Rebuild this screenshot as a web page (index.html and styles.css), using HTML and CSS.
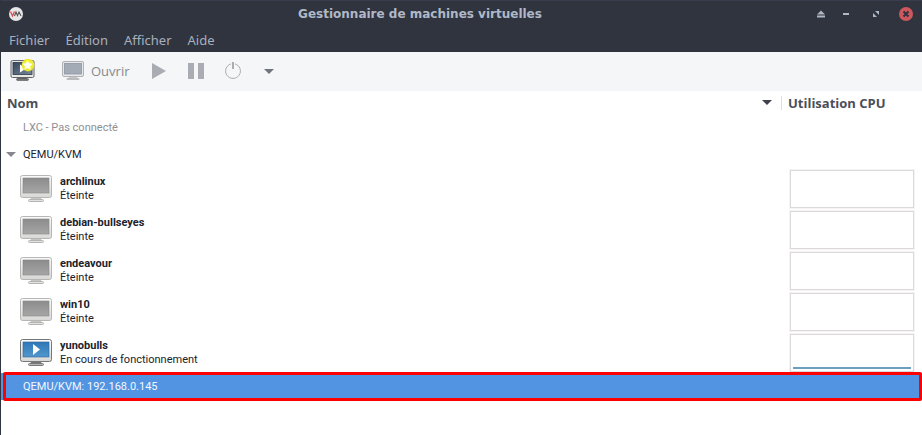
FILE: index.html
```html
<!DOCTYPE html>
<html lang="fr">
<head>
<meta charset="utf-8">
<title>Gestionnaire de machines virtuelles</title>
<link rel="stylesheet" href="styles.css">
</head>
<body>
<svg class="defs" aria-hidden="true">
  <defs>
    <linearGradient id="frame" x1="0" y1="0" x2="0" y2="1"><stop offset="0" stop-color="#fafafa"/><stop offset="1" stop-color="#d8d8d6"/></linearGradient>
    <linearGradient id="grey" x1="0" y1="0" x2="0" y2="1"><stop offset="0" stop-color="#8c8c8c"/><stop offset="1" stop-color="#a6a6a6"/></linearGradient>
    <linearGradient id="blue" x1="0" y1="0" x2="0" y2="1"><stop offset="0" stop-color="#2f78b7"/><stop offset="1" stop-color="#5197cd"/></linearGradient>
    <linearGradient id="slate" x1="0" y1="0" x2="1" y2="1"><stop offset="0" stop-color="#36465a"/><stop offset="1" stop-color="#77879b"/></linearGradient>
    <radialGradient id="glow"><stop offset="0" stop-color="#fffff0"/><stop offset=".45" stop-color="#f4f03c"/><stop offset=".8" stop-color="#ece82a"/><stop offset="1" stop-color="#ece82a" stop-opacity="0"/></radialGradient>
    <symbol id="off" viewBox="0 0 32 28">
      <path d="M11 23h10l1 2H10z" fill="#c4c4c2"/><rect x="8.500" y="24.500" width="15" height="2" rx="1" fill="#e2e2e0" stroke="#b4b4b2"/>
      <rect x=".5" y=".5" width="31" height="22" rx="2" fill="url(#frame)" stroke="#b6b6b4"/>
      <rect x="3" y="3" width="26" height="15" fill="url(#grey)" stroke="#858585" stroke-width=".6"/>
    </symbol>
    <symbol id="on" viewBox="0 0 32 28">
      <path d="M11 23h10l1 2H10z" fill="#777"/><rect x="8.500" y="24.500" width="15" height="2" rx="1" fill="#b8b8b6" stroke="#777"/>
      <rect x=".5" y=".5" width="31" height="22" rx="2" fill="url(#frame)" stroke="#777"/>
      <rect x="3" y="3" width="26" height="15" fill="url(#blue)" stroke="#28639a" stroke-width=".6"/>
      <path d="M13 5l7 5.500-7 5.500z" fill="#fff"/>
    </symbol>
  </defs>
</svg>
<header class="titlebar">
  <svg class="logo" viewBox="0 0 14 14" aria-hidden="true"><circle cx="7" cy="7" r="7" fill="#e6e6e6"/><path d="M1.500 4.500L3.500 9l2-4.500" fill="none" stroke="#e04b50" stroke-width="1.300"/><path d="M5.500 9l1.500-4 1.500 3.500L10 5l2 4" fill="none" stroke="#555" stroke-width="1.100"/></svg>
  <h1>Gestionnaire de machines virtuelles</h1>
  <div class="controls">
    <button aria-label="Enrouler"><svg viewBox="0 0 14 14"><path d="M3 7.500L7 3.500l4 4zM3 8.500h8v2H3z"/></svg></button>
    <button aria-label="Réduire"><svg viewBox="0 0 14 14"><path d="M4 6h6v2H4z"/></svg></button>
    <button aria-label="Agrandir"><svg viewBox="0 0 14 14"><path d="M6 4h4v4zM4 6v4h4z"/></svg></button>
    <button aria-label="Fermer"><svg viewBox="0 0 14 14"><circle class="red" cx="7" cy="7" r="7"/><path class="cross" d="M4.500 4.500l5 5m0-5l-5 5"/></svg></button>
  </div>
</header>
<nav class="menubar">
  <button>Fichier</button><button>Édition</button><button>Afficher</button><button>Aide</button>
</nav>
<div class="toolbar" role="toolbar">
  <button class="new" aria-label="Nouvelle machine virtuelle"><svg width="26" height="24" viewBox="0 0 26 24">
    <path d="M9 18h8l1 2H8z" fill="#777"/><rect x="7.500" y="19.500" width="12" height="2" rx="1" fill="#777" stroke="#555" stroke-width=".6"/>
    <rect x="2" y="1.500" width="23" height="17" rx="1.500" fill="#e8e8e6" stroke="#60646a"/>
    <rect x="4" y="3.500" width="19" height="12" fill="url(#slate)" stroke="#2c3748" stroke-width=".8"/>
    <path d="M11 5.500l6 4-6 4z" fill="#fff"/><circle cx="19" cy="6" r="7" fill="url(#glow)"/>
    <path d="M18.500 1l1.500 3.300 3.700.4-2.700 2.500.7 3.600-3.200-1.800-3.200 1.800.7-3.600-2.700-2.500 3.700-.4z" fill="#fffff6"/>
  </svg></button>
  <button class="open"><svg width="22" height="20" viewBox="0 0 22 20">
    <path d="M7 16h8l1 2H6z" fill="#c4c6c8"/><rect x="4.500" y="17" width="13" height="2" rx="1" fill="#b9bbbd"/>
    <rect x=".5" y=".5" width="21" height="15" rx="1.500" fill="#e6e7e8" stroke="#b0b2b5"/>
    <rect x="2.500" y="2.500" width="17" height="10.500" fill="#a3abb7" stroke="#8e96a3" stroke-width=".8"/>
  </svg><span>Ouvrir</span></button>
  <button class="run" aria-label="Démarrer"><svg width="14" height="16" viewBox="0 0 14 16"><path d="M0 0l14 8-14 8z"/></svg></button>
  <button class="pause" aria-label="Pause"><svg width="16" height="16" viewBox="0 0 16 16"><path d="M0 0h6v16H0zM10 0h6v16h-6z"/></svg></button>
  <button class="power" aria-label="Éteindre"><svg width="16" height="18" viewBox="0 0 16 18"><path class="line" d="M6 1.900a7.400 7.400 0 1 0 4 0"/><path d="M7 0h2v7H7z"/></svg></button>
  <button class="more" aria-label="Plus d’options"><svg width="10" height="5" viewBox="0 0 10 5"><path d="M0 0h10L5 5z"/></svg></button>
</div>
<table class="machines">
  <thead>
    <tr><th scope="col"><div class="sort">Nom<svg width="10" height="5" viewBox="0 0 10 5"><path d="M0 0h10L5 5z"/></svg></div></th><th scope="col" class="cpu"><div>Utilisation CPU</div></th></tr>
  </thead>
  <tbody>
    <tr class="host off"><td>LXC - Pas connecté</td><td></td></tr>
    <tr class="host"><td><div class="group"><svg width="10" height="5" viewBox="0 0 10 5"><path d="M0 0h10L5 5z"/></svg>QEMU/KVM</div></td><td></td></tr>
    <tr class="vm"><td><div class="guest"><svg><use href="#off"/></svg><p><b>archlinux</b><br>Éteinte</p></div></td><td><div class="graph"></div></td></tr>
    <tr class="vm"><td><div class="guest"><svg><use href="#off"/></svg><p><b>debian-bullseyes</b><br>Éteinte</p></div></td><td><div class="graph"></div></td></tr>
    <tr class="vm"><td><div class="guest"><svg><use href="#off"/></svg><p><b>endeavour</b><br>Éteinte</p></div></td><td><div class="graph"></div></td></tr>
    <tr class="vm"><td><div class="guest"><svg><use href="#off"/></svg><p><b>win10</b><br>Éteinte</p></div></td><td><div class="graph"></div></td></tr>
    <tr class="vm"><td><div class="guest"><svg><use href="#on"/></svg><p><b>yunobulls</b><br>En cours de fonctionnement</p></div></td><td><div class="graph active"></div></td></tr>
    <tr class="host selected"><td>QEMU/KVM: 192.168.0.145</td><td></td></tr>
  </tbody>
</table>
</body>
</html>
```
FILE: styles.css
```css
* { box-sizing: border-box; }
body {
  margin: 0;
  min-height: 100vh;
  border-left: 1px solid #2f343f;
  background: #fff;
  color: #20222c;
  font: 11px/14px Roboto, "Noto Sans", sans-serif;
}
.defs { position: absolute; width: 0; height: 0; }
button { margin: 0; padding: 0; border: 0; background: none; color: inherit; font: inherit; }
svg { display: block; flex: none; }

.titlebar {
  display: flex;
  align-items: center;
  height: 27px;
  margin-left: -1px;
  padding: 0 9px;
  border-top: 1px solid #383e50;
  background: #2f343f;
  color: #afb8c6;
}
.titlebar > * { margin: 0 0 1px; }
.logo { width: 14px; height: 14px; }
.titlebar h1 { flex: 1; padding-left: 3px; font: bold 12px/16px "DejaVu Sans", sans-serif; text-align: center; }
.controls { display: flex; justify-content: flex-end; gap: 11px; }
.controls button:nth-child(n + 3) { margin-left: 5px; }
.controls svg { width: 14px; height: 14px; fill: #afb8c6; }
.controls .red { fill: #cc575d; }
.controls .cross { stroke: #2f343f; stroke-width: 2; }

.menubar {
  display: flex;
  gap: 16px;
  height: 25px;
  margin-left: -1px;
  padding-left: 9px;
  background: #2f343f;
  color: #a9b0bd;
  font: 13px/18px "Noto Sans", sans-serif;
}

.toolbar {
  display: flex;
  align-items: center;
  height: 39px;
  padding: 0 8px 1px;
  background: #f5f6f7;
  color: #85888e;
  fill: #a9acb2;
  font: 13px/18px "Open Sans", sans-serif;
}
.open { display: flex; align-items: center; gap: 7px; margin-left: 27px; }
.run { margin-left: 22px; }
.pause { margin-left: 22px; }
.power { margin-left: 21px; }
.power .line { fill: none; stroke: #a9acb2; }
.more { margin-left: 23px; fill: #70747e; }

.machines { width: 100%; border-collapse: collapse; table-layout: fixed; }
.machines th, .machines td { padding: 0; text-align: left; }
.machines th {
  height: 23px;
  color: #4b4f5a;
  font: bold 13px/14px "Open Sans", sans-serif;
}
.sort { display: flex; align-items: center; justify-content: space-between; padding: 0 9px 0 6px; }
.sort svg { fill: #3e424d; }
.cpu { width: 141px; }
.cpu div { padding-left: 6px; border-left: 1px solid #dcdfe3; }

.host { height: 27px; }
.machines .host td:first-child { padding-left: 22px; }
.off { color: #8e9094; }
.group { display: flex; align-items: center; gap: 7px; margin-left: -17px; fill: #85878c; }
.vm { height: 41px; }
.guest { display: flex; align-items: center; gap: 8px; padding-left: 19px; }
.guest svg { width: 32px; height: 28px; }
.guest p { margin: 0; }
.graph {
  height: 38px;
  margin: 0 8px 0 9px;
  padding: 2px;
  border: 1px solid #dcd9da;
  outline: 1px solid #f5f3f4;
}
.active { display: flex; align-items: flex-end; }
.active::after { content: ""; flex: 1; height: 2px; background: #6c9fbd; }

.selected { position: relative; background: #5294e2; color: #f3f7fd; }
.selected td:first-child::after {
  content: "";
  position: absolute;
  inset: -1px 0 -1px 2px;
  border: 3px solid #f00;
  border-radius: 2px;
}
```
